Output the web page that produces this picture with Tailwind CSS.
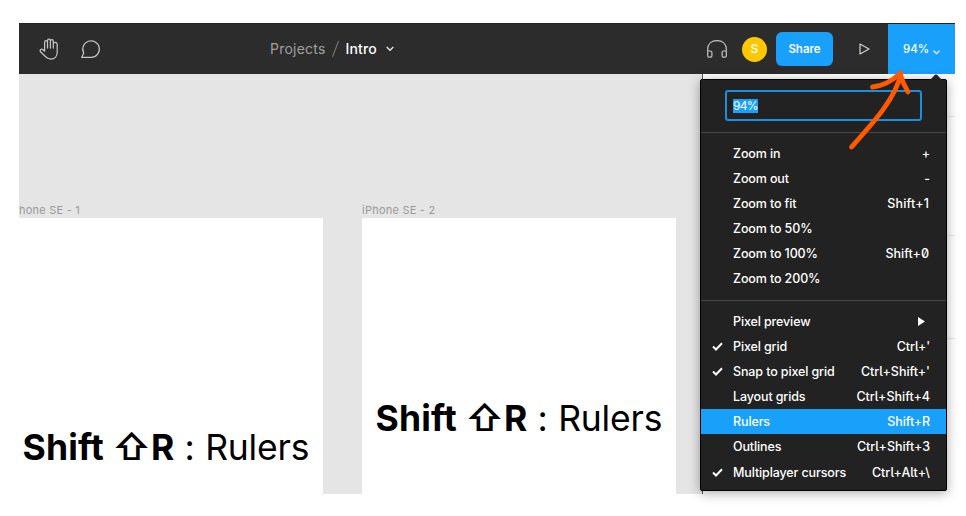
<!DOCTYPE html>
<html lang="en">
<head>
<meta charset="utf-8">
<title>Intro</title>
<script src="https://cdn.jsdelivr.net/npm/@tailwindcss/browser@4"></script>
</head>
<body class="bg-white font-['Inter',sans-serif]">
<div class="w-[966px] h-[516px] pl-[19px] pt-[23px] overflow-hidden">
<div class="relative w-[936px] h-[471px]">
  <div class="w-full h-full flex flex-col overflow-hidden">
    <header class="h-[51px] shrink-0 bg-[#2c2c2c] border-t border-[#222] flex items-center text-white">
      <div class="w-[251px] shrink-0 flex items-center pl-5">
        <svg class="w-5 h-[22px]" viewBox="0 0 20 22" fill="none" stroke="#c4c4c4" stroke-width="1.25" stroke-linejoin="round" stroke-linecap="round"><path d="M5.600 13.200V4.200c0-2 2.900-2 2.900 0V10M8.500 10V2.500c0-2 2.900-2 2.900 0V10M11.400 10V3.200c0-2 2.900-2 2.900 0V10M14.300 10V5.800c0-2 3.900-2 3.900 0.600V14.500c0 4-2.700 6.500-6.300 6.500-2.600 0-4.400-1-5.800-2.800L1.500 13.800c-1.200-2 1-3.500 2.500-2.100L5.600 13.200"/></svg>
        <svg class="w-5 h-5 ml-[22px]" viewBox="0 0 20 20" fill="none" stroke="#c4c4c4" stroke-width="1.25" stroke-linejoin="round"><path d="M.7 18.400l2-4.400A8.300 8.300 0 1 1 10.200 18.400z"/></svg>
      </div>
      <div class="flex items-center text-sm h-6 w-[437px] shrink-0">
        <span class="text-[#a0a0a0] tracking-[0.23px]">Projects</span>
        <svg class="w-[7px] h-4 ml-[6px]" viewBox="0 0 7 16" stroke="#777" stroke-width="1.1"><path d="M6.500 0L.5 16"/></svg>
        <span class="ml-[7px] font-medium tracking-[0.1px]">Intro</span>
        <svg class="w-2 h-[6px] ml-[9px]" viewBox="0 0 8 6" fill="none" stroke="#e8e8e8" stroke-width="1.3"><path d="M.7 1L4 4.300 7.300 1"/></svg>
      </div>
      <svg class="w-5 h-[18px] shrink-0" viewBox="0 0 20 18" fill="none" stroke="#c4c4c4" stroke-width="1.2" stroke-linejoin="round"><path d="M.7 16V9.500C.7 4 4.500.700 10 .700S19.300 4 19.300 9.500V16c0 .8-.4 1.200-1.200 1.200h-1.600c-.9 0-1.400-.5-1.400-1.400V12.400c0-.9.500-1.400 1.400-1.400h2.800M.7 16c0 .8.4 1.200 1.200 1.200h1.600c.9 0 1.400-.5 1.400-1.400V12.400c0-.9-.5-1.400-1.400-1.400H.700"/></svg>
      <div class="ml-[15px] size-[25px] rounded-full bg-[#ffc700] flex items-center justify-center text-xs font-medium shrink-0">S</div>
      <div class="ml-[9px] w-[57px] h-[34px] rounded-[6px] bg-[#18a0fb] flex items-center justify-center text-[11.500px] font-semibold shrink-0"><span class="pt-px">Share</span></div>
      <svg class="w-[11px] h-3 ml-[26px] shrink-0" viewBox="0 0 11 12" fill="none" stroke="#d0d0d0" stroke-width="1.2" stroke-linejoin="round"><path d="M1 1l9 5-9 5z"/></svg>
      <div class="ml-auto w-[67px] h-[51px] bg-[#18a0fb] flex items-center pl-[15px] text-[11.5px] font-medium shrink-0"><span class="w-[24px] pt-px">94%</span>
        <svg class="w-[7px] h-[5px] ml-[6px] mt-[6px]" viewBox="0 0 7 5" fill="none" stroke="white" stroke-width="1.2"><path d="M.5.700l3 3 3-3"/></svg>
      </div>
    </header>
    <main class="grow bg-[#e5e5e5] flex text-[#999] text-[11px] tracking-[0.23px]">
      <section class="w-[304px] shrink-0 flex flex-col">
        <div class="h-[144px] flex items-end pb-[1px] leading-[14px] whitespace-nowrap">hone SE - 1</div>
        <div class="grow bg-white pt-[208px] pl-[3.500px]"><div class="text-black text-[35.5px] leading-[44px] tracking-[0.15px] whitespace-nowrap"><span class="font-bold">Shift <span class="font-semibold">⇧</span>R</span><span class="font-normal tracking-[-0.2px]"><span class="tracking-[0.2px]"> : </span>Rulers</span></div></div>
      </section>
      <section class="w-[314px] ml-[39px] shrink-0 flex flex-col">
        <div class="h-[144px] flex items-end pb-[1px] leading-[14px]">iPhone SE - 2</div>
        <div class="grow bg-white pt-[179px] pl-[13.5px]"><div class="text-black text-[35.5px] leading-[44px] tracking-[0.15px] whitespace-nowrap"><span class="font-bold">Shift <span class="font-semibold">⇧</span>R</span><span class="font-normal tracking-[-0.2px]"><span class="tracking-[0.2px]"> : </span>Rulers</span></div></div>
      </section>
      <aside class="ml-auto w-[253px] bg-white border-l border-[#555] shrink-0">
        <div class="h-[43px] border-b border-[#e5e5e5]"></div>
        <div class="h-[119px] border-b border-[#e5e5e5]"></div>
        <div class="h-[103px] border-b border-[#e5e5e5]"></div>
      </aside>
    </main>
  </div>

  <!-- Zoom menu -->
  <div class="absolute left-[681px] top-[56px] w-[247px] h-[412px]">
    <svg class="absolute left-[230px] -top-[5px] w-[12px] h-[6px]" viewBox="0 0 12 6" fill="#222"><path d="M0 6L5 .8q1-.8 2 0L12 6z"/></svg>
    <div class="w-full h-full bg-[#222] rounded-[2px] border border-black shadow-[0_2px_12px_rgba(0,0,0,0.35)] text-white text-[12.5px] tracking-[-0.12px] font-medium leading-[25.1px] flex flex-col">
      <div class="h-[53px] pt-[10px] pl-6 border-b border-[#4a4a4a] shrink-0">
        <div class="w-[197px] h-[31px] border-2 border-[#1a8fe0] rounded-[3px] flex items-center pl-[6px]"><span class="bg-[#18a0fb] text-[12px] font-normal tracking-[-0.7px] leading-[14px]">94%</span></div>
      </div>
      <div class="h-[168px] pt-[8px] border-b border-[#4a4a4a] shrink-0">
        <div class="flex justify-between pl-8 pr-4"><span>Zoom in</span><span>+</span></div>
        <div class="flex justify-between pl-8 pr-4"><span>Zoom out</span><span>-</span></div>
        <div class="flex justify-between pl-8 pr-[17px]"><span>Zoom to fit</span><span class="tracking-[0.15px]">Shift+1</span></div>
        <div class="flex justify-between pl-8 pr-[17px]"><span>Zoom to 50%</span></div>
        <div class="flex justify-between pl-8 pr-[17px]"><span>Zoom to 100%</span><span class="[font-feature-settings:'zero'] tracking-[0.02px]">Shift+0</span></div>
        <div class="flex justify-between pl-8 pr-[17px]"><span>Zoom to 200%</span></div>
      </div>
      <div class="pt-2">
        <div class="flex justify-between items-center pl-8 pr-[21px]"><span>Pixel preview</span><svg class="w-[7px] h-[9px]" viewBox="0 0 7 9" fill="white"><path d="M0 0l7 4.500L0 9z"/></svg></div>
        <div class="flex items-center pl-[11px] pr-4"><svg class="w-[11px] h-[9px] mr-[10px]" viewBox="0 0 11 9" fill="none" stroke="white" stroke-width="2"><path d="M1 4.500l3 3L10 1.200"/></svg><span>Pixel grid</span><span class="ml-auto [font-feature-settings:'cv05'] tracking-[-0.12px]">Ctrl+'</span></div>
        <div class="flex items-center pl-[11px] pr-4"><svg class="w-[11px] h-[9px] mr-[10px]" viewBox="0 0 11 9" fill="none" stroke="white" stroke-width="2"><path d="M1 4.500l3 3L10 1.200"/></svg><span>Snap to pixel grid</span><span class="ml-auto [font-feature-settings:'cv05'] tracking-[-0.02px]">Ctrl+Shift+'</span></div>
        <div class="flex justify-between pl-8 pr-4"><span>Layout grids</span><span class="[font-feature-settings:'cv05'] tracking-[0px]">Ctrl+Shift+4</span></div>
        <div class="flex justify-between pl-8 pr-4 bg-[#18a0fb]"><span>Rulers</span><span>Shift+R</span></div>
        <div class="flex justify-between pl-8 pr-4"><span>Outlines</span><span class="[font-feature-settings:'cv05'] tracking-[0px]">Ctrl+Shift+3</span></div>
        <div class="flex items-center pl-[11px] pr-4"><svg class="w-[11px] h-[9px] mr-[10px]" viewBox="0 0 11 9" fill="none" stroke="white" stroke-width="2"><path d="M1 4.500l3 3L10 1.200"/></svg><span>Multiplayer cursors</span><span class="ml-auto [font-feature-settings:'cv05'] tracking-[0px]">Ctrl+Alt+\</span></div>
      </div>
    </div>
  </div>

  <!-- Hand-drawn arrow pointing at the zoom level -->
  <svg class="absolute left-[821px] top-[42px] w-[100px] h-[94px]" viewBox="840 65 100 94" fill="none" stroke="#ff5a00" stroke-width="4.800" stroke-linecap="round" stroke-linejoin="round"><path d="M851.500 147C874 122 896 98 901 73M872.500 87C883 86 893 80 900 73.500Q903 84 908 92"/></svg>
</div>
</div>
</body>
</html>
